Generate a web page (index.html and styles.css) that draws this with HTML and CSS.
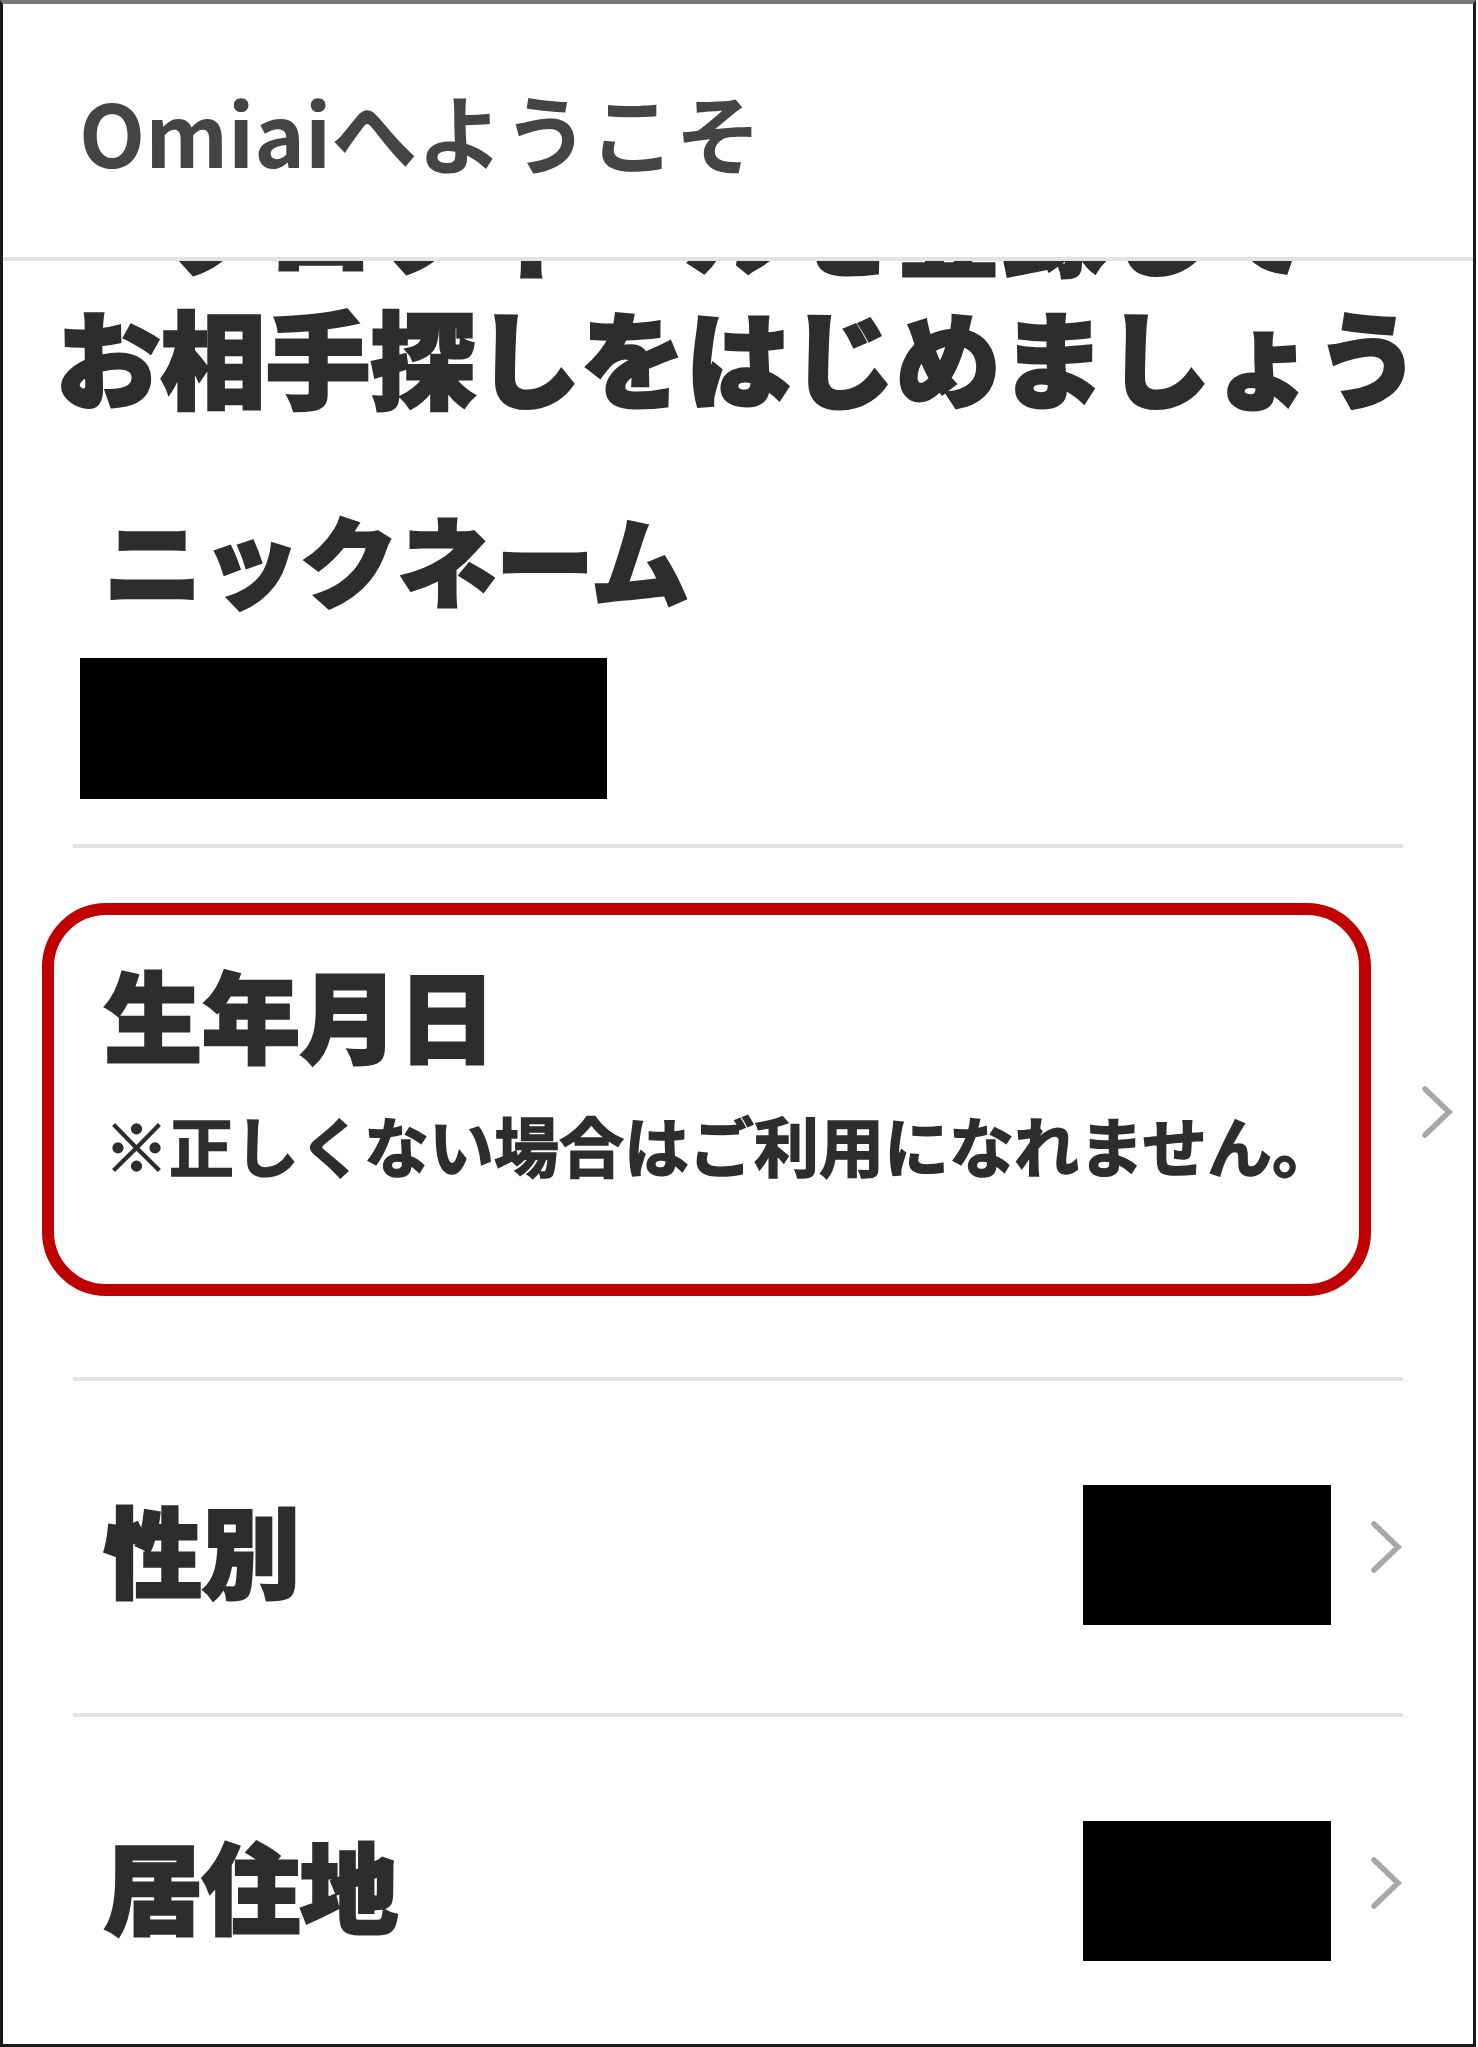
FILE: index.html
```html
<!DOCTYPE html>
<html lang="ja">
<head>
    <meta charset="UTF-8">
    <meta name="viewport" content="width=device-width, initial-scale=1.0">
    <title>Omiaiへようこそ</title>
    <link rel="stylesheet" href="styles.css">
</head>
<body>
    <div class="screen">
        <header class="header">Omiaiへようこそ</header>

        <h1 class="title">プロフィールを登録して<br>お相手探しをはじめましょう</h1>

        <div class="section">
            <div class="label nickname">ニックネーム</div>
            <div class="masked masked-wide"></div>
        </div>
        <div class="divider"></div>

        <div class="birthday-row">
            <div class="highlight">
                <div class="label">生年月日</div>
                <div class="note">※正しくない場合はご利用になれません。</div>
            </div>
            <svg class="chevron chevron-birthday" viewBox="0 0 34 56"><polyline points="5,5 29,28 5,51"/></svg>
        </div>
        <div class="divider divider-after-birthday"></div>

        <div class="row">
            <div class="label">性別</div>
            <div class="masked masked-small"></div>
            <svg class="chevron" viewBox="0 0 34 56"><polyline points="5,5 29,28 5,51"/></svg>
        </div>
        <div class="divider"></div>

        <div class="row">
            <div class="label">居住地</div>
            <div class="masked masked-small"></div>
            <svg class="chevron" viewBox="0 0 34 56"><polyline points="5,5 29,28 5,51"/></svg>
        </div>
    </div>
</body>
</html>
```

FILE: styles.css
```css
body {
    margin: 0;
    background: #fff;
    font-family: "Noto Sans CJK JP", "Noto Sans", sans-serif;
    color: #2d2d2d;
}

.screen {
    position: relative;
    width: 1476px;
    height: 2047px;
    box-sizing: border-box;
    border: 3px solid #1a1a1a;
    border-top: 4px solid #777;
    overflow: hidden;
    background: #fff;
}

/* fixed header lies over the scrolled content */
.header {
    position: absolute;
    top: 0;
    left: 0;
    right: 0;
    z-index: 2;
    height: 253px;
    display: flex;
    align-items: center;
    padding-left: 76px;
    background: #fff;
    border-bottom: 4px solid #e3e3e3;
    font-size: 86px;
    font-weight: 700;
    color: #444;
}

.title {
    margin: 151px 0 0;
    font-size: 105px;
    line-height: 133px;
    font-weight: 900;
    text-align: center;
    color: #2d2d2d;
    -webkit-text-stroke: 3px #2d2d2d;
}

.section {
    margin: 0 70px;
}

.label {
    font-size: 98px;
    line-height: 116px;
    font-weight: 900;
    color: #2d2d2d;
    -webkit-text-stroke: 3px #2d2d2d;
}

.nickname {
    margin-top: 78px;
    padding-left: 31px;
}

.masked {
    background: #000;
}

.masked-wide {
    width: 527px;
    height: 141px;
    margin-top: 43px;
    margin-left: 7px;
}

.masked-small {
    width: 248px;
    height: 140px;
    margin-top: 16px;
}

.divider {
    height: 4px;
    margin: 45px 70px 0;
    background: #e3e3e3;
}

.birthday-row {
    display: flex;
    align-items: flex-start;
    margin: 55px 0 0 39px;
}

.highlight {
    width: 1329px;
    height: 393px;
    box-sizing: border-box;
    border: 12px solid #c00000;
    border-radius: 64px;
    padding: 39px 0 0 50px;
}

.note {
    margin-top: 34px;
    font-size: 65px;
    line-height: 80px;
    font-weight: 700;
    color: #2d2d2d;
    -webkit-text-stroke: 1.5px #2d2d2d;
}

.chevron {
    width: 34px;
    height: 56px;
    flex-shrink: 0;
    fill: none;
    stroke: #a8a8a8;
    stroke-width: 5.5;
    stroke-linecap: round;
    stroke-linejoin: miter;
}

.chevron-birthday {
    margin: 181px 0 0 49px;
}

.divider-after-birthday {
    margin-top: 81px;
}

.row + .divider {
    margin-top: 0;
}

.row {
    display: flex;
    align-items: center;
    height: 332px;
    margin: 0 70px;
}

.row .label {
    flex: 1;
    padding-left: 31px;
}

.row .chevron {
    margin-left: 38px;
}
```
